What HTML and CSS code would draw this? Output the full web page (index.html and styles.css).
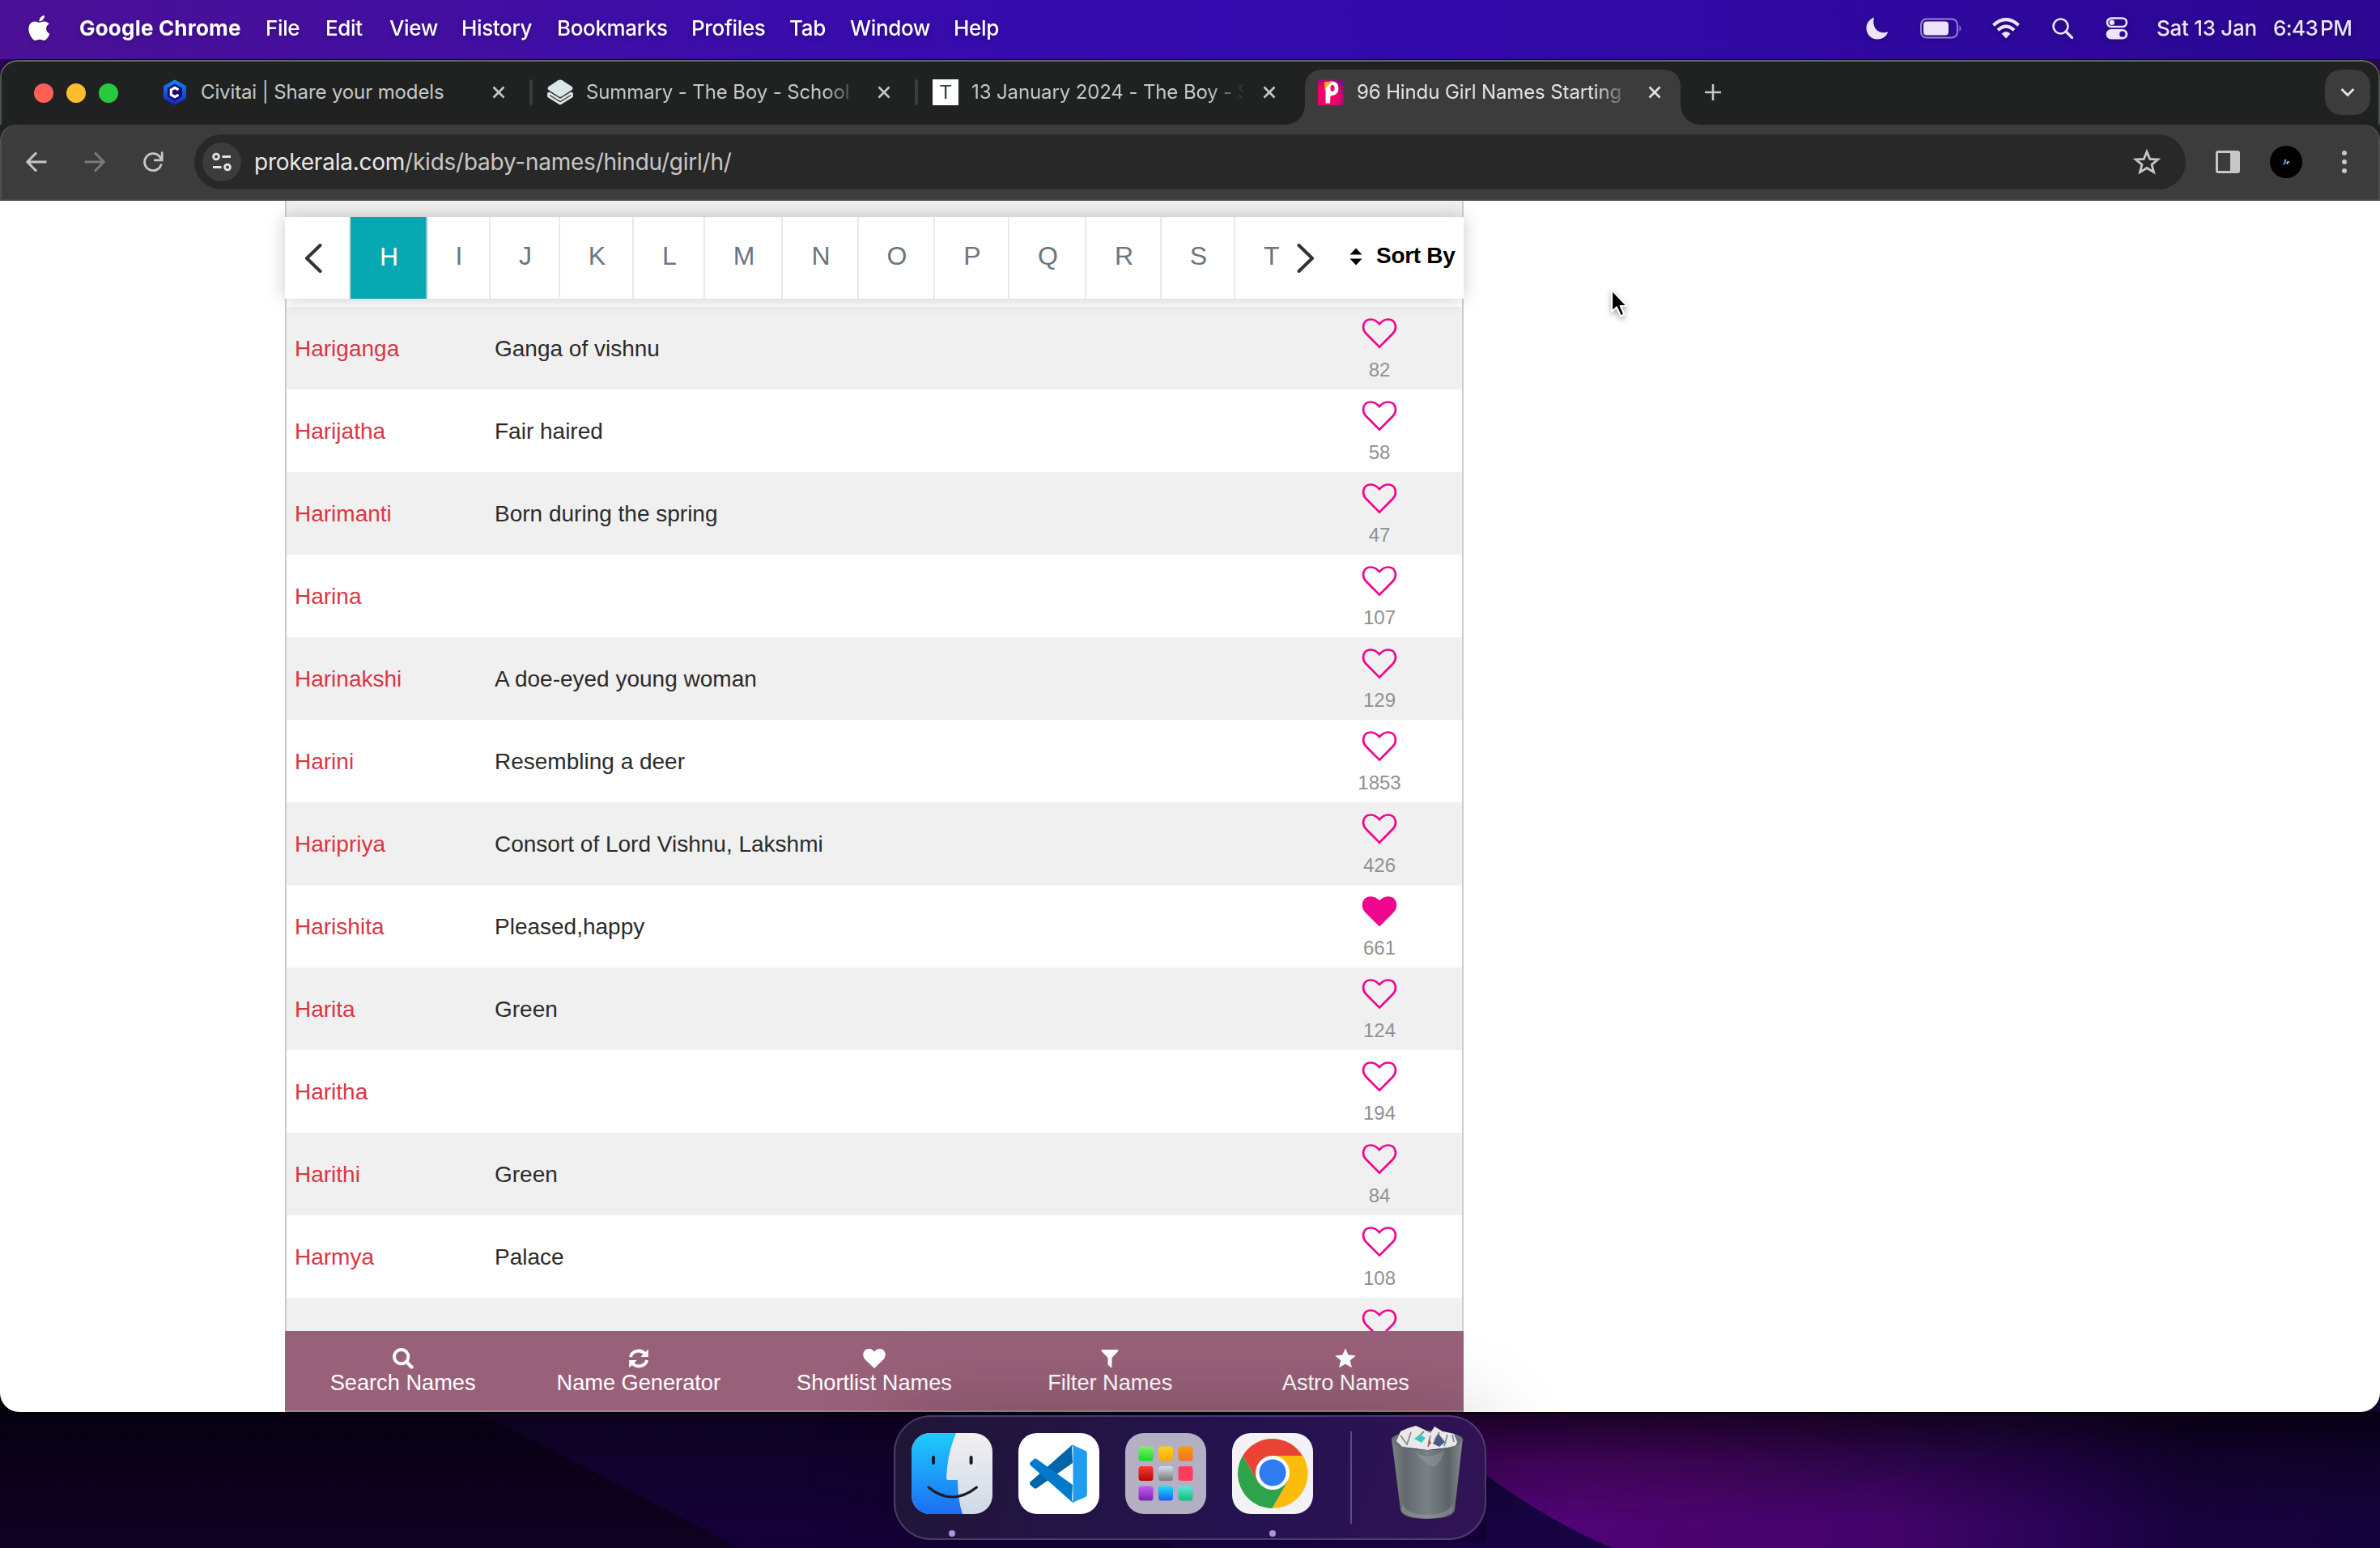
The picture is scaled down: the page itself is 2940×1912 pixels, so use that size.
FILE: index.html
```html
<!DOCTYPE html>
<html lang="en">
<head>
<meta charset="utf-8">
<title>96 Hindu Girl Names Starting With H</title>
<link rel="stylesheet" href="styles.css">
</head>
<body>
<svg class="defs" width="0" height="0" aria-hidden="true">
  <symbol id="heart" viewBox="0 0 44 38"><path d="M22 35.600 5.500 19C-.5 12.500 1.500 1.500 11.500 1.500 16 1.500 18.800 3.600 22 7.200 25.200 3.600 28 1.500 32.500 1.500 42.500 1.500 44.500 12.500 38.500 19Z" stroke="#f0058f" stroke-width="2.700"/></symbol>
  <symbol id="close" viewBox="0 0 16 16"><path d="M1.500 1.500 14.500 14.500M14.500 1.500 1.500 14.500" fill="none" stroke="currentColor" stroke-width="2.600"/></symbol>
</svg>
<svg class="wallpaper" viewBox="0 0 2940 1912" aria-hidden="true">
  <defs>
    <linearGradient id="wL" x1="0" y1="0" x2="0" y2="1"><stop offset="0" stop-color="#04020c"/><stop offset=".5" stop-color="#0a0119"/><stop offset="1" stop-color="#0d0220"/></linearGradient>
    <linearGradient id="wM" x1="0" y1="0" x2="0" y2="1"><stop offset="0" stop-color="#06020f"/><stop offset=".5" stop-color="#10022c"/><stop offset="1" stop-color="#150038"/></linearGradient>
    <linearGradient id="wP" x1="0" y1="0" x2="1" y2="0"><stop offset="0" stop-color="#5a0580"/><stop offset=".25" stop-color="#4d0371"/><stop offset=".5" stop-color="#43046a"/><stop offset=".68" stop-color="#280355"/><stop offset=".8" stop-color="#18023d"/><stop offset="1" stop-color="#14023c"/></linearGradient>
    <linearGradient id="wA" x1="0" y1="0" x2="1" y2="0"><stop offset="0" stop-color="#5a0580"/><stop offset=".4" stop-color="#4f0570"/><stop offset=".75" stop-color="#31075f"/><stop offset="1" stop-color="#1c0640"/></linearGradient>
    <linearGradient id="wS" x1="0" y1="0" x2="0" y2="1"><stop offset="0" stop-color="#000" stop-opacity=".68"/><stop offset=".35" stop-color="#000" stop-opacity=".3"/><stop offset=".8" stop-color="#000" stop-opacity="0"/></linearGradient>
  </defs>
  <rect width="2940" height="1912" fill="#2c0550"/>
  <rect y="1700" width="2940" height="212" fill="url(#wL)"/>
  <path d="M480 1690Q715 1806 912 1912H2100V1690Z" fill="url(#wM)"/>
  <path d="M1438 1904H1836V1822L1991 1912H1450Z" fill="#190443"/>
  <path d="M1722 1744 1836 1822Q1915 1880 1991 1912H2940V1700H1722Z" fill="url(#wP)"/>
  <path d="M1722 1744 1836 1822 1880 1856Q2070 1870 2236 1843 2420 1815 2613 1744L2700 1700H1722Z" fill="url(#wA)"/>
  <path d="M1836 1822Q1915 1880 1991 1912H1836Z" fill="#180443"/>
  <rect x="1722" y="1744" width="1218" height="168" fill="url(#wS)"/>
</svg>

<header class="menubar">
  <svg class="apple" viewBox="4 32 365 448"><path fill="#fff" d="M318.700 268.700c-.2-36.700 16.400-64.400 50-84.800-18.800-26.900-47.200-41.700-84.700-44.600-35.500-2.800-74.300 20.700-88.500 20.700-15 0-49.400-19.700-76.400-19.700C63.300 141.200 4 184.800 4 273.500q0 39.300 14.400 81.200c12.800 36.700 59 126.700 107.200 125.200 25.200-.6 43-17.900 75.800-17.900 31.800 0 48.300 17.900 76.400 17.900 48.600-.7 90.400-82.500 102.600-119.300-65.200-30.700-61.700-90-61.700-91.900zm-56.600-164.200c27.300-32.400 24.800-61.900 24-72.500-24.100 1.400-52 16.400-67.900 34.900-17.500 19.800-27.800 44.300-25.600 71.900 26.100 2 49.900-11.400 69.500-34.300z"/></svg>
  <nav class="menus">
    <span class="app">Google Chrome</span><span class="m1">File</span><span class="m2">Edit</span><span class="m3">View</span><span class="m4">History</span><span class="m5">Bookmarks</span><span class="m6">Profiles</span><span class="m7">Tab</span><span class="m8">Window</span><span>Help</span>
  </nav>
  <div class="status">
    <svg width="28" height="28" viewBox="0 0 28 28"><path fill="#ebe5f7" d="M10 .5C3.500 3 .5 8.500.5 13.500.5 21.500 6.500 27.500 14 27.500 20 27.500 25 24.500 27.300 18.500 18 21.500 6.500 16 10 .5Z"/></svg>
    <svg class="battery" width="52" height="26" viewBox="0 0 52 26"><rect x="1" y="1.500" width="45" height="23" rx="7" fill="none" stroke="#fff" stroke-opacity=".5" stroke-width="2"/><rect x="4" y="4.500" width="31" height="17" rx="4" fill="#ebe5f7"/><path d="M48.500 9Q52 13 48.500 17Z" fill="#fff" fill-opacity=".5"/></svg>
    <svg class="wifi" width="34" height="26" viewBox="0 0 34 26"><g fill="none" stroke="#ebe5f7" stroke-width="4.200"><path d="M1.500 9.200Q17-5 32.500 9.200"/><path d="M7 15.200Q17 6 27 15.200"/></g><path d="M11.500 19.500Q17 14.500 22.500 19.500L17 25.500Z" fill="#ebe5f7"/></svg>
    <svg class="find" width="26" height="26" viewBox="0 0 26 26"><circle cx="10.500" cy="10.500" r="9" fill="none" stroke="#ebe5f7" stroke-width="2.600"/><path d="M17 17 24.500 24.500" stroke="#ebe5f7" stroke-width="3.200" stroke-linecap="round"/></svg>
    <svg class="control" width="28" height="28" viewBox="0 0 28 28"><rect x="2" y="1.500" width="24" height="10.500" rx="5.250" fill="none" stroke="#ebe5f7" stroke-width="2.600"/><circle cx="7.800" cy="6.700" r="3.200" fill="#ebe5f7"/><rect x=".7" y="15" width="26.600" height="12.500" rx="6.200" fill="#ebe5f7"/><circle cx="20.800" cy="21.200" r="3.600" fill="#2f0a9e"/></svg>
    <span class="date">Sat 13 Jan</span><span class="time">6:43 PM</span>
  </div>
</header>

<main class="window">
  <div class="tabstrip">
    <div class="lights"><i class="red"></i><i class="yellow"></i><i class="green"></i></div>
    <div class="tab t1">
      <svg width="32" height="32" viewBox="0 0 32 32"><defs><linearGradient id="cv" x1="0" y1="0" x2="0" y2="1"><stop offset="0" stop-color="#1488f5"/><stop offset="1" stop-color="#1325c9"/></linearGradient></defs><path d="M16 .5 30 8.300V23.700L16 31.500 2 23.700V8.300Z" fill="url(#cv)"/><path d="M16 5.500 25 10.800V21.200L16 26.500 7 21.200V10.800Z" fill="#1a0c6e"/><path d="M20.500 12.800 16 10.300 11.300 13V19L16 21.700 20.500 19.200" fill="none" stroke="#fff" stroke-width="3.200"/></svg>
      <span class="title">Civitai | Share your models</span><svg class="x"><use href="#close"/></svg>
    </div>
    <i class="sep"></i>
    <div class="tab t2">
      <svg width="32" height="32" viewBox="0 0 32 32"><path d="M13.500 1.200Q16-.2 18.500 1.200L30.500 9Q32.500 11 30.500 13L17.500 21.500Q16 22.300 14.500 21.500L1.500 13Q-.5 11 1.500 9Z" fill="#dce6e6"/><path d="M1.500 16.500 16 25.300 30.500 16.500M1.500 16.500V21L16 30 30.500 21V16.500" fill="none" stroke="#dce6e6" stroke-width="2.700" stroke-linejoin="round"/></svg>
      <span class="title fade">Summary - The Boy - School</span><svg class="x"><use href="#close"/></svg>
    </div>
    <i class="sep"></i>
    <div class="tab t3">
      <span class="tico">T</span>
      <span class="title fade">13 January 2024 - The Boy - S</span><svg class="x"><use href="#close"/></svg>
    </div>
    <div class="tab t4 active">
      <svg width="32" height="32" viewBox="0 0 32 32"><defs><radialGradient id="pk" cx=".35" cy=".65" r=".8"><stop offset=".55" stop-color="#f0046c"/><stop offset="1" stop-color="#6f147e"/></radialGradient></defs><rect width="32" height="32" fill="url(#pk)"/><path d="M9 13V8Q11 2 17.500 2.500 25.500 3 25.500 11 25.500 19.500 15.500 20.500L15 29.500H9.500V13Z" fill="#fff"/><path d="M8 3H18Q11 7 8.500 14.500Z" fill="#f7a823"/><ellipse cx="18" cy="11" rx="2.600" ry="4" fill="#f0046c"/></svg>
      <span class="title fade">96 Hindu Girl Names Starting</span><svg class="x"><use href="#close"/></svg>
    </div>
    <svg class="plus" width="20" height="20" viewBox="0 0 20 20"><path d="M10 0V20M0 10H20" stroke="#c7c7c7" stroke-width="2.600"/></svg>
    <div class="chev"><svg width="18" height="12" viewBox="0 0 18 12"><path d="M1.500 2 9 9.500 16.500 2" fill="none" stroke="#e3e3e3" stroke-width="2.800"/></svg></div>
  </div>

  <div class="toolbar">
    <svg class="back" width="26" height="26" viewBox="0 0 26 26"><path d="M25.500 13H2M13 1.500 1.800 13 13 24.500" fill="none" stroke="#c7c7c7" stroke-width="2.900"/></svg>
    <svg class="fwd" width="26" height="26" viewBox="0 0 26 26"><path d="M.5 13H24M13 1.500 24.200 13 13 24.500" fill="none" stroke="#7b7b7b" stroke-width="2.900"/></svg>
    <svg class="reload" width="26" height="26" viewBox="0 0 26 26"><path d="M23.300 15.500A10.500 10.500 0 1 1 21.500 6.800L24 10" fill="none" stroke="#c7c7c7" stroke-width="2.900"/><path d="M24.200.5V10.800H14" fill="none" stroke="#c7c7c7" stroke-width="2.800"/></svg>
    <div class="omnibox">
      <div class="tune"><svg width="24" height="24" viewBox="0 0 24 24" fill="none" stroke="#e3e3e3" stroke-width="2.800"><circle cx="5" cy="5.500" r="3.400"/><path d="M12.500 5.500H23M1 18.500H11.500"/><circle cx="19" cy="18.500" r="3.400"/></svg></div>
      <span class="url"><b>prokerala.com</b>/kids/baby-names/hindu/girl/h/</span>
      <svg class="star" width="34" height="32" viewBox="0 0 34 32"><path d="M17 3.500 20.700 12.300 30.600 13 23 19.300 25.500 28.600 17 23.500 8.500 28.600 11 19.300 3.400 13 13.300 12.300Z" fill="none" stroke="#c7c7c7" stroke-width="2.800"/></svg>
    </div>
    <svg class="panel" width="30" height="30" viewBox="0 0 30 30"><rect x="1.500" y="2.500" width="27" height="25" rx="1.500" fill="none" stroke="#c7c7c7" stroke-width="3"/><path d="M18 2H28V28H18Z" fill="#c7c7c7"/></svg>
    <span class="avatar">Je</span>
    <div class="dots"><i></i><i></i><i></i></div>
  </div>

  <section class="page">
    <div class="column">
      <div class="alpha">
        <svg class="prev" width="22" height="36" viewBox="0 0 22 36"><path d="M19.500 2 3 18 19.500 34" fill="none" stroke="#333" stroke-width="4" stroke-linecap="round" stroke-linejoin="round"/></svg>
        <a class="on" style="width:97px">H</a><a style="width:78px">I</a><a style="width:86px">J</a><a style="width:91px">K</a><a style="width:88px">L</a><a style="width:96px">M</a><a style="width:94px">N</a><a style="width:94px">O</a><a style="width:92px">P</a><a style="width:95px">Q</a><a style="width:93px">R</a><a style="width:91px">S</a><a class="last">T</a>
        <svg class="next" width="22" height="36" viewBox="0 0 22 36"><path d="M2.500 2 19 18 2.500 34" fill="none" stroke="#333" stroke-width="4" stroke-linecap="round" stroke-linejoin="round"/></svg>
        <svg class="sort" width="16" height="22" viewBox="0 0 16 22"><path d="M8 .5 15.500 8.500H.5ZM8 21.500 15.500 13.500H.5Z" fill="#000"/></svg>
        <b class="sortby">Sort By</b>
      </div>
      <div class="rows">
        <div class="row"><a>Hariganga</a><p>Ganga of vishnu</p><div class="fav"><svg><use href="#heart"/></svg><span>82</span></div></div>
        <div class="row"><a>Harijatha</a><p>Fair haired</p><div class="fav"><svg><use href="#heart"/></svg><span>58</span></div></div>
        <div class="row"><a>Harimanti</a><p>Born during the spring</p><div class="fav"><svg><use href="#heart"/></svg><span>47</span></div></div>
        <div class="row"><a>Harina</a><p></p><div class="fav"><svg><use href="#heart"/></svg><span>107</span></div></div>
        <div class="row"><a>Harinakshi</a><p>A doe-eyed young woman</p><div class="fav"><svg><use href="#heart"/></svg><span>129</span></div></div>
        <div class="row"><a>Harini</a><p>Resembling a deer</p><div class="fav"><svg><use href="#heart"/></svg><span>1853</span></div></div>
        <div class="row"><a>Haripriya</a><p>Consort of Lord Vishnu, Lakshmi</p><div class="fav"><svg><use href="#heart"/></svg><span>426</span></div></div>
        <div class="row"><a>Harishita</a><p>Pleased,happy</p><div class="fav liked"><svg><use href="#heart"/></svg><span>661</span></div></div>
        <div class="row"><a>Harita</a><p>Green</p><div class="fav"><svg><use href="#heart"/></svg><span>124</span></div></div>
        <div class="row"><a>Haritha</a><p></p><div class="fav"><svg><use href="#heart"/></svg><span>194</span></div></div>
        <div class="row"><a>Harithi</a><p>Green</p><div class="fav"><svg><use href="#heart"/></svg><span>84</span></div></div>
        <div class="row"><a>Harmya</a><p>Palace</p><div class="fav"><svg><use href="#heart"/></svg><span>108</span></div></div>
        <div class="row"><a>Harsha</a><p>A name given to one who is always full of happiness and delight</p><div class="fav"><svg><use href="#heart"/></svg></div></div>
      </div>
      <nav class="actions">
        <a><svg width="26" height="26" viewBox="0 0 26 26"><circle cx="10.700" cy="10.700" r="8.700" fill="none" stroke="#fff" stroke-width="3.800"/><path d="M17 17 23.500 23.500" stroke="#fff" stroke-width="4.400" stroke-linecap="round"/></svg>Search Names</a>
        <a><svg width="26" height="26" viewBox="0 0 26 26"><g fill="none" stroke="#fff" stroke-width="3.800"><path d="M2.800 11A10.300 9.800 0 0 1 20.800 7.200"/><path d="M23.200 15A10.300 9.800 0 0 1 5.200 18.800"/></g><path d="M24.800 1.500V11H15.300ZM1.200 24.500V15H10.700Z" fill="#fff"/></svg>Name Generator</a>
        <a><svg width="28" height="26" viewBox="0 0 28 26"><path d="M14 25 2.500 14C-1.500 9.500 0 1 7.500 1 11 1 12.800 3.200 14 4.500 15.200 3.200 17 1 20.500 1 28 1 29.500 9.500 25.500 14Z" fill="#fff"/></svg>Shortlist Names</a>
        <a><svg width="22" height="26" viewBox="0 0 22 26"><path d="M1 2H21Q22 3 21 4.200L13.500 12V23.500Q13 24.800 12 24L8.500 20.500V12L1 4.200Q0 3 1 2Z" fill="#fff"/></svg>Filter Names</a>
        <a><svg width="26" height="26" viewBox="0 0 26 26"><path d="M13 .2 16.600 8.600 25.800 9.400 18.800 15.300 21 24.300 13 19.700 5 24.300 7.200 15.300.2 9.400 9.400 8.600Z" fill="#fff"/></svg>Astro Names</a>
      </nav>
    </div>
  </section>
</main>

<footer class="dock">
  <div class="slot run"><svg width="100" height="100" viewBox="0 0 100 100"><defs><clipPath id="sq"><rect width="100" height="100" rx="23"/></clipPath><linearGradient id="fb" x1="0" y1="0" x2="0" y2="1"><stop offset="0" stop-color="#1ccdfd"/><stop offset="1" stop-color="#1d6df5"/></linearGradient><linearGradient id="fw" x1="0" y1="0" x2="0" y2="1"><stop offset="0" stop-color="#f1f0f1"/><stop offset="1" stop-color="#cfdae8"/></linearGradient></defs><g clip-path="url(#sq)"><rect width="100" height="100" fill="url(#fw)"/><path d="M0 0H55Q44 26 43 56 43 58 45 58H57Q57 82 63 100H0Z" fill="url(#fb)"/></g><g fill="none" stroke="#1b1b22" stroke-linecap="round"><path d="M27 30V37M73.600 30V37" stroke-width="4"/><path d="M21 67Q50 91 80.500 67" stroke-width="3"/></g></svg></div>
  <div class="slot"><svg width="100" height="100" viewBox="0 0 100 100"><rect width="100" height="100" rx="23" fill="#fff"/><path d="M66 15 14.500 60.500Q13.500 62.500 14.500 64L19.500 68.300Q21 69 22.500 68.300L67 37Z" fill="#0065a9"/><path d="M67 64 22.500 32Q21 31 19.500 32L14.500 36.500Q13.500 38 14.500 39.500L66 85Z" fill="#007acc"/><path d="M65 15.500Q66 14.500 68 15L83 22Q84.800 23 84.800 25V76Q84.800 78 83 79L68 85.500Q66 86 65 84.500 67.500 84 67.500 81V19Q67.500 16 65 15.500Z" fill="#1f9cf0"/></svg></div>
  <div class="slot"><svg width="100" height="100" viewBox="0 0 100 100"><defs><linearGradient id="a1" x2="0" y2="1"><stop stop-color="#7cf26a"/><stop offset="1" stop-color="#16d62a"/></linearGradient><linearGradient id="a2" x2="0" y2="1"><stop stop-color="#fdd023"/><stop offset="1" stop-color="#fba80c"/></linearGradient><linearGradient id="a3" x2="0" y2="1"><stop stop-color="#fb9d05"/><stop offset="1" stop-color="#f1702a"/></linearGradient><linearGradient id="a4" x2="0" y2="1"><stop stop-color="#fb3a30"/><stop offset="1" stop-color="#b50606"/></linearGradient><linearGradient id="a5" x2="0" y2="1"><stop stop-color="#d3e0ea"/><stop offset="1" stop-color="#75787b"/></linearGradient><linearGradient id="a7" x2="0" y2="1"><stop stop-color="#c45cf0"/><stop offset="1" stop-color="#7a22b4"/></linearGradient><linearGradient id="a8" x2="0" y2="1"><stop stop-color="#1cdcfd"/><stop offset="1" stop-color="#1f5cf2"/></linearGradient><linearGradient id="a9" x2="0" y2="1"><stop stop-color="#63e6d8"/><stop offset="1" stop-color="#0fbd7c"/></linearGradient></defs><rect width="100" height="100" rx="23" fill="#b5afc3"/><rect x="16.500" y="16.500" width="18" height="18" rx="3.500" fill="url(#a1)"/><rect x="41" y="16.500" width="18" height="18" rx="3.500" fill="url(#a2)"/><rect x="65.500" y="16.500" width="18" height="18" rx="3.500" fill="url(#a3)"/><rect x="16.500" y="41" width="18" height="18" rx="3.500" fill="url(#a4)"/><rect x="41" y="41" width="18" height="18" rx="3.500" fill="url(#a5)"/><rect x="65.500" y="41" width="18" height="18" rx="3.500" fill="#fd3d5e"/><rect x="16.500" y="65.500" width="18" height="18" rx="3.500" fill="url(#a7)"/><rect x="41" y="65.500" width="18" height="18" rx="3.500" fill="url(#a8)"/><rect x="65.500" y="65.500" width="18" height="18" rx="3.500" fill="url(#a9)"/></svg></div>
  <div class="slot run"><svg width="100" height="100" viewBox="0 0 100 100"><rect width="100" height="100" rx="23" fill="#f3f3f6"/><path d="M13.100 28A43 43 0 0 1 87.500 29H50V50L31.800 60.500Z" fill="#ea4335"/><path d="M87.500 28A43 43 0 0 1 49.400 93L68.200 60.500 50 50V28Z" fill="#fbbc0a"/><path d="M49.400 93A43 43 0 0 1 13.100 28L31.800 60.500 50 50 68.200 60.500Z" fill="#2fa24c"/><circle cx="50" cy="49" r="21" fill="#fff"/><circle cx="50" cy="49" r="16.600" fill="#2f7bf0"/></svg></div>
  <i class="divider"></i>
  <svg class="trash" width="90" height="116" viewBox="0 0 90 116"><defs><linearGradient id="tb" x1="0" y1="0" x2="1" y2="0"><stop offset="0" stop-color="#7c8387"/><stop offset=".2" stop-color="#626a6e"/><stop offset=".5" stop-color="#7b8285"/><stop offset=".8" stop-color="#5c6468"/><stop offset="1" stop-color="#838a8d"/></linearGradient></defs><ellipse cx="45" cy="17" rx="44" ry="11" fill="#6c7377"/><path d="M7 19 12 7 21 3 31 0 42 5 49 9 54 1 64 7 78 10 82 20 80 26 45 30 14 26Z" fill="#e9e9ea"/><path d="M12 12 20 23 25 8M41 7 36 12M49 12 46 26M60 8 54 18M70 11 66 25M76 11 78 20" fill="none" stroke="#8a8a8c" stroke-width="1.800"/><path d="M29 16 36 11 43 15 38 21Z" fill="#35c9c0"/><path d="M52 22 59 10 67 20 60 26Z" fill="#4a5a86"/><path d="M46 26 47 16 50 21Z" fill="#d6472c"/><path d="M1 16Q3 24 20 27 32 30 45 30 58 30 70 27 87 24 89 16L79 104Q76 115 45 115 15 115 12 104Z" fill="url(#tb)"/><path d="M14 96Q20 110 45 110 70 110 77 96L76 106Q70 114 45 114 20 114 14 106Z" fill="#aab0b2" opacity=".35"/><path d="M30 31Q45 45 66 30 58 60 44 46 34 40 30 31Z" fill="#a4aaac" opacity=".35"/></svg>
</footer>
<svg class="cursor" width="30" height="42" viewBox="0 0 30 42"><path d="M4 3V30L10 24.500 15 35.500 19.500 33.500 14.800 23H23Z" fill="#000" stroke="#fff" stroke-width="2.200" stroke-linejoin="round"/></svg>
</body>
</html>
```
FILE: styles.css
```css
* { box-sizing: border-box; }
html, body { margin: 0; width: 2940px; height: 1912px; overflow: hidden; }
body { position: relative; display: flex; flex-direction: column; font-family: "Liberation Sans", Arial, sans-serif; }
svg { display: block; flex: none; }
.defs { position: absolute; }
.wallpaper { position: absolute; inset: 0; width: 2940px; height: 1912px; z-index: -1; }

/* menu bar */
.menubar { height: 73px; flex: none; display: flex; padding: 0 34px 4px 35px; align-items: center; background: linear-gradient(90deg, #4b1196 0, #430fa0 500px, #390cab 1000px, #330aad 1500px, #2f089f 2400px, #2c0791 2940px); font: 500 26px/36px Inter, sans-serif; color: #fff; }
.menubar svg, .menubar span { filter: drop-shadow(0 2px 3px rgba(0,0,0,.25)); }
.apple { width: 26px; height: 31px; margin-right: 37px; }
.menus { display: flex; white-space: nowrap; letter-spacing: -.35px; }
.menus .app { width: 230px; font-weight: 700; letter-spacing: .2px; }
.m1 { width: 74px; } .m2 { width: 79px; } .m3 { width: 89px; } .m4 { width: 118px; } .m5 { width: 166px; }
.m6 { width: 121px; } .m7 { width: 75px; } .m8 { width: 128px; }
.status { margin-left: auto; display: flex; align-items: center; color: #ebe5f7; }
.battery { margin-left: 39px; } .wifi { margin-left: 37px; } .find { margin-left: 40px; } .control { margin-left: 40px; }
.date { width: 144px; margin-left: 35px; white-space: nowrap; letter-spacing: -.3px; }
.time { width: 98px; white-space: nowrap; letter-spacing: -.6px; word-spacing: -3.5px; }

/* browser window */
.window { height: 1671px; flex: none; display: flex; flex-direction: column; border-radius: 22px 22px 24px 24px; overflow: hidden; background: #1f2221; border-top: 1px solid #08060c; box-shadow: 0 2px 0 #000; }
.tabstrip { height: 80px; flex: none; display: flex; align-items: center; padding: 0 12px 0 42px; font: 400 24px/32px Inter, sans-serif; color: #c7c7c7; box-shadow: inset 0 2px 0 #666a68, inset 2px 0 0 #4c504e, inset -2px 0 0 #4c504e; border-radius: 22px 22px 0 0; }
.lights { display: flex; gap: 16px; margin: 2px 54px 0 0; }
.lights i { width: 24px; height: 24px; border-radius: 50%; }
.red { background: #ff5f57; } .yellow { background: #febc2e; } .green { background: #28c840; }
.tab { display: flex; align-items: center; flex: none; }
.title { margin-left: 16px; width: 338px; overflow: hidden; white-space: nowrap; letter-spacing: -.12px; }
.fade { -webkit-mask-image: linear-gradient(90deg, #000 calc(100% - 44px), transparent); mask-image: linear-gradient(90deg, #000 calc(100% - 44px), transparent); }
.x { width: 16px; height: 16px; margin-left: 22px; }
.sep { width: 4px; height: 32px; margin: 0 18.5px 0 29.5px; background: #3c3c3c; border-radius: 2px; }
.tico { width: 32px; height: 32px; background: #fff; color: #34404d; text-align: center; font: 400 24px/31px "Liberation Sans", sans-serif; }
.t4 { position: relative; height: 68px; margin: 12px 0 0 36px; padding: 0 24px 12px 16px; width: 464px; background: #3c3c3c; border-radius: 20px 20px 0 0; color: #e3e3e3; align-self: flex-start; }
.t4::before, .t4::after { content: ""; position: absolute; bottom: 0; width: 24px; height: 24px; }
.t4::before { left: -24px; background: radial-gradient(circle at 0 0, transparent 23.5px, #3c3c3c 24px); }
.t4::after { right: -24px; background: radial-gradient(circle at 100% 0, transparent 23.5px, #3c3c3c 24px); }
.plus { margin-left: 30px; }
.chev { width: 56px; height: 56px; margin-left: auto; border-radius: 20px; background: #3c3c3c; display: grid; place-items: center; }

.toolbar { height: 94px; flex: none; display: flex; align-items: center; padding: 0 41px 0 32px; background: #3c3c3c; border-bottom: 2px solid #4a4a4a; border-radius: 20px 20px 0 0; box-shadow: inset 2px 0 0 #4f4f4f, inset -2px 0 0 #4f4f4f; }
.fwd { margin-left: 46px; } .reload { margin: 0 38px 0 46px; }
.omnibox { width: 2460px; height: 68px; border-radius: 34px; background: #282828; display: flex; align-items: center; padding: 0 31px 0 10px; }
.tune { width: 48px; height: 48px; border-radius: 50%; background: #3c3c3c; display: grid; place-items: center; margin-right: 16px; }
.url { font: 400 28px/40px Inter, sans-serif; letter-spacing: -.24px; color: #c7c7c7; white-space: nowrap; }
.url b { font-weight: 400; color: #e8e8e8; }
.star { margin-left: auto; }
.panel { margin-left: 37px; }
.avatar { width: 40px; height: 40px; margin-left: 37px; border-radius: 50%; background: #000; color: #ddd; font: italic 700 9px/40px "Liberation Serif", serif; text-align: center; }
.dots { margin-left: auto; display: flex; flex-direction: column; gap: 5px; }
.dots i { width: 6px; height: 6px; border-radius: 50%; background: #c7c7c7; }

/* page */
.page { flex: 1; min-height: 0; background: #fff; padding: 0 1132px 0 352px; display: flex; overflow: hidden; }
.column { position: relative; width: 1456px; display: flex; flex-direction: column; padding-top: 20px; background: linear-gradient(#f0f0f0 0 20px, #fff 20px); border: solid #ccc; border-width: 0 2px; height: 1496px; }
.alpha { position: relative; height: 101px; flex: none; margin: 0 -2px; background: #fff; display: flex; align-items: center; box-shadow: 0 0 20px rgba(0,0,0,.22); z-index: 1; }
.prev { margin: 0 33px 0 24px; }
.alpha a { height: 101px; flex: none; border-right: 2px solid #e9e9ea; padding-left: 2px; font-size: 32px; line-height: 96px; text-align: center; color: #6c757d; }
.alpha .on { background: #06a8b2; color: #fff; line-height: 99px; border-left: 2px solid #e0e4e4; border-right-color: #7fc9ce; }
.alpha .last { border: 0; width: 76px; padding-left: 35px; text-align: left; }
.sort { margin: -4px 17px 0 43px; }
.sortby { font-size: 28px; line-height: 95px; letter-spacing: -.3px; color: #000; height: 101px; white-space: nowrap; }
.rows { flex: 1; min-height: 0; overflow: hidden; padding-top: 10px; }
.row { height: 102px; display: flex; align-items: center; padding-left: 10px; font-size: 28px; line-height: 40px; color: #2b2b2b; }
.row:nth-child(odd) { background: #f0f0f0; }
.row a { width: 246px; padding-top: 2px; color: #dc3545; }
.row p { margin: 0; padding: 2px 0 0 1px; width: 1000px; white-space: nowrap; }
.fav { width: 188px; height: 102px; display: flex; flex-direction: column; align-items: center; padding-top: 14px; fill: none; }
.fav svg { width: 44px; height: 38px; }
.liked { fill: #f0058f; }
.fav span { font-size: 24px; line-height: 28px; margin-top: 12px; color: #909090; }
.actions { height: 100px; flex: none; margin: 0 -2px; display: grid; grid-template-columns: repeat(5, 1fr); background: #996179; border-bottom: 2px solid #aa7d90; color: #fff; font-size: 27.2px; line-height: 32px; }
.actions a { display: flex; flex-direction: column; align-items: center; gap: 1px; padding-top: 21px; }

/* dock */
.dock { position: absolute; left: 1104px; top: 1748px; width: 732px; height: 154px; display: flex; padding: 20px; border: 2px solid rgba(140,120,175,.38); border-radius: 46px; background: linear-gradient(110deg, #1f1636, #251250 60%, #321455); box-shadow: 0 0 110px rgba(0,0,0,.22); gap: 32px; }
.slot { position: relative; height: 100px; }
.run::after { content: ""; position: absolute; left: 46px; top: 120px; width: 8px; height: 8px; border-radius: 50%; background: #ab93d6; }
.divider { width: 2px; height: 114px; margin: -2px 16px 0 14px; background: #5f4a86; flex: none; }
.trash { margin-top: -9px; }
.cursor { position: absolute; left: 1987px; top: 355px; filter: drop-shadow(0 3px 3px rgba(0,0,0,.35)); }
```
